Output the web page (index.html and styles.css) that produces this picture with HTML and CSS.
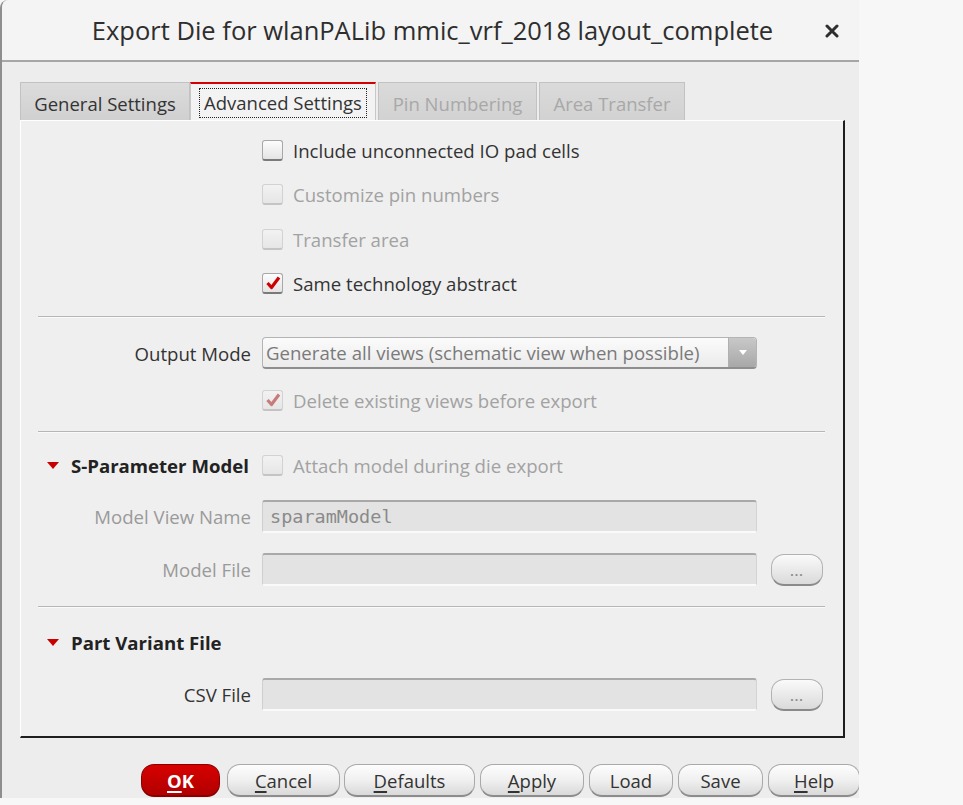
FILE: index.html
```html
<!DOCTYPE html>
<html>
<head>
<meta charset="utf-8">
<link rel="stylesheet" href="styles.css">
</head>
<body>
<div class="dialog">
  <div class="titlebar">
    <span class="title">Export Die for wlanPALib mmic_vrf_2018 layout_complete</span>
    <span class="close">
      <svg width="14" height="14" viewBox="0 0 14 14"><path d="M2 2 L12 12 M12 2 L2 12" stroke="#2e2e2e" stroke-width="3" stroke-linecap="round"/></svg>
    </span>
  </div>
  <div class="content">
    <div class="tabs">
      <div class="tab tab-general">General Settings</div>
      <div class="tab tab-advanced active"><span class="focus">Advanced Settings</span></div>
      <div class="tab tab-pin disabled">Pin Numbering</div>
      <div class="tab tab-area disabled">Area Transfer</div>
    </div>
    <div class="panel">
      <div class="sec sec-checks">
        <div class="row row-check">
          <label class="check"><span class="box"></span>Include unconnected IO pad cells</label>
        </div>
        <div class="row row-check">
          <label class="check disabled"><span class="box"></span>Customize pin numbers</label>
        </div>
        <div class="row row-check">
          <label class="check disabled"><span class="box"></span>Transfer area</label>
        </div>
        <div class="row row-check">
          <label class="check"><span class="box"><svg width="16" height="16" viewBox="0 0 16 16"><path d="M2.5 8 L6.5 12.5 L14 2.5" fill="none" stroke="#cf0000" stroke-width="3.2" stroke-linejoin="round"/></svg></span>Same technology abstract</label>
        </div>
      </div>
      <div class="sep"></div>
      <div class="sec sec-output">
        <div class="row row-combo">
          <span class="lbl">Output Mode</span>
          <div class="combo">
            <span class="combo-text">Generate all views (schematic view when possible)</span>
            <span class="combo-btn"><svg width="8" height="5" viewBox="0 0 8 5"><path d="M0 0 L8 0 L4 5 Z" fill="#ffffff"/></svg></span>
          </div>
        </div>
        <div class="row row-delete">
          <label class="check disabled"><span class="box"><svg width="16" height="16" viewBox="0 0 16 16"><path d="M2.5 8 L6.5 12.5 L14 2.5" fill="none" stroke="#c77b7b" stroke-width="3.2" stroke-linejoin="round"/></svg></span>Delete existing views before export</label>
        </div>
      </div>
      <div class="sep"></div>
      <div class="sec sec-sparam">
        <div class="row row-head">
          <span class="lbl head"><span class="tri"></span>S-Parameter Model</span>
          <label class="check disabled"><span class="box"></span>Attach model during die export</label>
        </div>
        <div class="row row-field row-mvn">
          <span class="lbl disabled">Model View Name</span>
          <div class="input"><span class="mono">sparamModel</span></div>
        </div>
        <div class="row row-field row-mf">
          <span class="lbl disabled">Model File</span>
          <div class="input"></div>
          <button class="browse">...</button>
        </div>
      </div>
      <div class="sep"></div>
      <div class="sec sec-part">
        <div class="row row-head">
          <span class="lbl head"><span class="tri"></span>Part Variant File</span>
        </div>
        <div class="row row-field row-csv">
          <span class="lbl">CSV File</span>
          <div class="input"></div>
          <button class="browse">...</button>
        </div>
      </div>
    </div>
    <div class="buttons">
      <button class="btn btn-ok"><u>O</u>K</button>
      <button class="btn btn-cancel"><u>C</u>ancel</button>
      <button class="btn btn-defaults"><u>D</u>efaults</button>
      <button class="btn btn-apply"><u>A</u>pply</button>
      <button class="btn btn-load">Load</button>
      <button class="btn btn-save">Save</button>
      <button class="btn btn-help"><u>H</u>elp</button>
    </div>
  </div>
</div>
</body>
</html>
```

FILE: styles.css
```css
* { box-sizing: border-box; }

html, body {
  margin: 0;
  padding: 0;
  background: #f7f7f7;
  font-family: "Open Sans", "DejaVu Sans", sans-serif;
  color: #333;
}

.dialog {
  width: 859px;
  height: 798px;
  background: #ededed;
  border-top-left-radius: 8px;
  border-left: 2px solid #8e8e8e;
  overflow: hidden;
}

.titlebar {
  height: 62px;
  background: #f4f4f4;
  border-bottom: 2px solid #a6a6a6;
  display: flex;
  align-items: center;
  justify-content: center;
  position: relative;
}

.title {
  font-size: 25.5px;
  color: #2e2e2e;
  margin-left: 4px;
  letter-spacing: 0;
}

.close {
  position: absolute;
  right: 20px;
  top: 24px;
  display: flex;
}

.content {
  padding: 20px 0 0 18px;
}

.tabs {
  display: flex;
  height: 38px;
  align-items: stretch;
}

.tab {
  font-size: 18.5px;
  color: #333;
  background: linear-gradient(#dcdcdc, #d0d0d0);
  border: 1px solid #c2c2c2;
  border-bottom: none;
  margin-right: 2px;
  display: flex;
  align-items: center;
  justify-content: center;
  padding-top: 4px;
  white-space: nowrap;
}

.tab-general { width: 170px; margin-right: 0; }
.tab-advanced { width: 186px; }
.tab-pin { width: 159px; }
.tab-area { width: 146px; }

.tab.active {
  background: #f3f3f3;
  border-top: 2px solid #d40000;
  border-color: #d40000 #c8c8c8 transparent #c8c8c8;
  padding-top: 2px;
}

.focus {
  border: 1px dotted #222;
  padding: 2px 4px 2px 4px;
  line-height: 24px;
}

.tab.disabled {
  color: #a8a8a8;
  background: linear-gradient(#dadada, #d2d2d2);
}

.panel {
  width: 825px;
  height: 618px;
  background: #efefef;
  border-top: 1px solid #ffffff;
  border-left: 1px solid #ffffff;
  border-right: 2px solid #1e1e1e;
  border-bottom: 2px solid #1e1e1e;
  padding: 0 18px 0 17px;
}

.sep {
  height: 2px;
  border-top: 1px solid #b6b6b6;
  border-bottom: 1px solid #fafafa;
}

.row {
  display: grid;
  grid-template-columns: 213px 495px 52px;
  column-gap: 11px;
  align-items: center;
  font-size: 18.6px;
}

.row > .check { grid-column: 2 / 4; }

.sec-checks { padding-top: 7px; margin-bottom: 10px; }
.row-check { height: 44.5px; }

.sec-output { padding-top: 19px; }
.row-combo { height: 32px; }
.row-delete { height: 32px; margin-top: 15px; margin-bottom: 15px; }

.sec-sparam { padding-top: 16px; }
.row-head { height: 32px; }
.row-mvn { margin-top: 19px; height: 33px; }
.row-mf { margin-top: 20px; height: 32px; margin-bottom: 21px; }

.sec-part { padding-top: 18px; }
.row-csv { margin-top: 20px; height: 32px; }

.lbl {
  text-align: right;
  color: #333;
  white-space: nowrap;
}

.lbl.disabled { color: #9a9a9a; }

.lbl.head {
  font-weight: 700;
  color: #222;
  display: flex;
  align-items: center;
  letter-spacing: 0;
}

.tri {
  width: 0;
  height: 0;
  border-left: 6px solid transparent;
  border-right: 6px solid transparent;
  border-top: 7px solid #c80000;
  margin-right: 12px;
  margin-left: 9px;
  margin-top: 1px;
}

.row-head .lbl.head { justify-content: flex-start; }

.check {
  display: flex;
  align-items: center;
  color: #333;
  white-space: nowrap;
}

.check.disabled { color: #a2a2a2; }

.box {
  width: 21px;
  height: 21px;
  border: 1px solid #a8a8a8;
  border-bottom: 2px solid #7a7a7a;
  border-radius: 3px;
  background: linear-gradient(#fdfdfd, #e4e4e4);
  margin-right: 10px;
  display: flex;
  align-items: center;
  justify-content: center;
  flex: none;
}

.check.disabled .box {
  border-color: #d2d2d2;
  border-bottom-color: #c4c4c4;
  background: linear-gradient(#f2f2f2, #e6e6e6);
}

.combo {
  height: 32px;
  border: 1px solid #b4b4b4;
  border-bottom: 2px solid #8e8e8e;
  border-radius: 4px;
  background: linear-gradient(#fbfbfb, #ebebeb);
  display: flex;
  align-items: center;
  overflow: hidden;
}

.combo-text {
  flex: 1;
  color: #7a7a7a;
  padding-left: 3px;
  white-space: nowrap;
  overflow: hidden;
}

.combo-btn {
  width: 28px;
  flex: none;
  height: 100%;
  background: linear-gradient(#c8c8c8, #a8a8a8);
  border-left: 1px solid #b0b0b0;
  display: flex;
  align-items: center;
  justify-content: center;
}

.input {
  height: 33px;
  background: #e3e3e3;
  border-top: 2px solid #a9a9a9;
  border-left: 1px solid #cfcfcf;
  border-right: 1px solid #d4d4d4;
  border-bottom: 2px solid #fafafa;
  border-radius: 3px;
  display: flex;
  align-items: center;
  padding-left: 7px;
}

.mono {
  font-family: "DejaVu Sans Mono", "Liberation Mono", monospace;
  font-size: 18.5px;
  color: #8a8a8a;
}

.browse {
  width: 52px;
  height: 32px;
  margin-left: 3px;
  border: 1px solid #b2b2b2;
  border-bottom: 2px solid #8a8a8a;
  border-radius: 13px;
  background: linear-gradient(#fafafa, #dadada);
  font-family: "Open Sans", sans-serif;
  font-size: 12px;
  font-weight: 700;
  color: #8a8a8a;
  padding: 5px 0 0 0;
  letter-spacing: 1px;
}

.buttons {
  display: flex;
  justify-content: flex-end;
  gap: 5px;
  margin-top: 26px;
  margin-right: -1px;
}

.btn {
  height: 33px;
  border: 1px solid #a9a9a9;
  border-bottom: 2px solid #8c8c8c;
  border-radius: 13px;
  background: linear-gradient(#fdfdfd 0%, #f0f0f0 50%, #d9d9d9 100%);
  font-family: "Open Sans", sans-serif;
  font-size: 18.5px;
  color: #333;
  padding: 0;
  white-space: nowrap;
}

.btn u { text-underline-offset: 3px; text-decoration-thickness: 1.5px; }

.btn-ok {
  width: 79px;
  background: linear-gradient(#d80000, #b00000);
  border-color: #8a0000;
  color: #ffffff;
  font-weight: 700;
  margin-right: 2px;
}
.btn-cancel { width: 113px; margin-right: -1px; }
.btn-defaults { width: 131px; }
.btn-apply { width: 104px; }
.btn-load { width: 84px; }
.btn-save { width: 85px; }
.btn-help { width: 92px; }
```
